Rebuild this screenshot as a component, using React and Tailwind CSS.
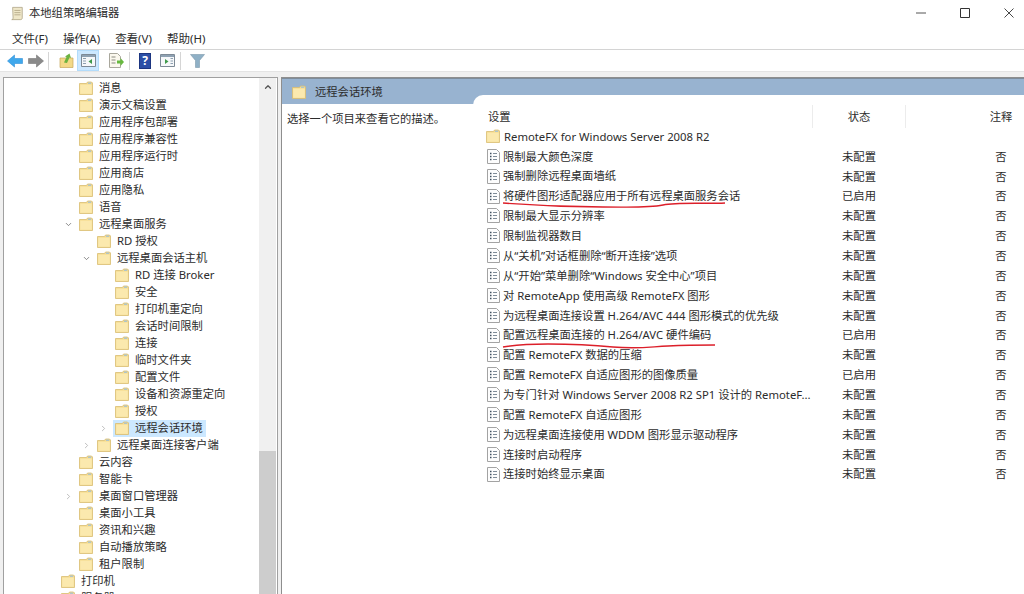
import React from 'react';
import { ChevronRight, ChevronDown, ChevronUp } from 'lucide-react';

const FONT = "font-['Noto_Sans','Noto_Sans_CJK_SC',sans-serif]";

const Folder = ({ className = '' }) => (
  <svg viewBox="0 0 14 14" className={`w-[14px] h-[14px] shrink-0 ${className}`}>
    <path d="M0.5 2.5h7l1-1.5h4l1 1v11.5h-13z" fill="#f6dc8e" stroke="#d9bd72" strokeWidth="0.8" />
    <path d="M1.2 3.6h11.6v9.2h-11.6z" fill="#fbe9ae" />
    <path d="M9 1.6h3.2v1.2h-3.2z" fill="#9fc0d8" />
  </svg>
);

const Doc = () => (
  <svg viewBox="0 0 13 15" className="w-[13px] h-[15px] shrink-0">
    <path d="M0.5 0.5h9l3 3v11h-12z" fill="#fdfdfd" stroke="#a3a3a3" strokeWidth="1" />
    <path d="M3 4.5h1.500M3 7.500h1.500M3 10.500h1.500" stroke="#3f4f5f" strokeWidth="1.300" />
    <path d="M6 4.500h4M6 7.500h4M6 10.500h4" stroke="#7f8c98" strokeWidth="1" />
  </svg>
);

// level 0 = 打印机, 每层缩进 18px
const tree = [
  [1, '消息'],
  [1, '演示文稿设置'],
  [1, '应用程序包部署'],
  [1, '应用程序兼容性'],
  [1, '应用程序运行时'],
  [1, '应用商店'],
  [1, '应用隐私'],
  [1, '语音'],
  [1, '远程桌面服务', 'open'],
  [2, 'RD 授权'],
  [2, '远程桌面会话主机', 'open'],
  [3, 'RD 连接 Broker'],
  [3, '安全'],
  [3, '打印机重定向'],
  [3, '会话时间限制'],
  [3, '连接'],
  [3, '临时文件夹'],
  [3, '配置文件'],
  [3, '设备和资源重定向'],
  [3, '授权'],
  [3, '远程会话环境', 'closed', true],
  [2, '远程桌面连接客户端', 'closed'],
  [1, '云内容'],
  [1, '智能卡'],
  [1, '桌面窗口管理器', 'closed'],
  [1, '桌面小工具'],
  [1, '资讯和兴趣'],
  [1, '自动播放策略'],
  [1, '租户限制'],
  [0, '打印机'],
  [0, '服务器'],
];

const rows = [
  ['限制最大颜色深度', '未配置'],
  ['强制删除远程桌面墙纸', '未配置'],
  ['将硬件图形适配器应用于所有远程桌面服务会话', '已启用'],
  ['限制最大显示分辨率', '未配置'],
  ['限制监视器数目', '未配置'],
  ['从“关机”对话框删除“断开连接”选项', '未配置'],
  ['从“开始”菜单删除“Windows 安全中心”项目', '未配置'],
  ['对 RemoteApp 使用高级 RemoteFX 图形', '未配置'],
  ['为远程桌面连接设置 H.264/AVC 444 图形模式的优先级', '未配置'],
  ['配置远程桌面连接的 H.264/AVC 硬件编码', '已启用'],
  ['配置 RemoteFX 数据的压缩', '未配置'],
  ['配置 RemoteFX 自适应图形的图像质量', '已启用'],
  ['为专门针对 Windows Server 2008 R2 SP1 设计的 RemoteF...', '未配置'],
  ['配置 RemoteFX 自适应图形', '未配置'],
  ['为远程桌面连接使用 WDDM 图形显示驱动程序', '未配置'],
  ['连接时启动程序', '未配置'],
  ['连接时始终显示桌面', '未配置'],
];

const indent = ['pl-[61px]', 'pl-[79px]', 'pl-[97px]', 'pl-[115px]'];
const arrowPos = ['left-[46px]', 'left-[64px]', 'left-[82px]', 'left-[99px]'];

const TreeRow = ({ level, label, arrow, selected }) => (
  <div className={`relative h-[17px] flex items-center shrink-0 ${indent[level]}`}>
    {arrow === 'open' && <ChevronDown className={`absolute ${arrowPos[level]} w-[9px] h-[9px] text-[#666]`} />}
    {arrow === 'closed' && <ChevronRight className={`absolute ${arrowPos[level]} w-[9px] h-[9px] text-[#aaa]`} />}
    <div className={`flex items-center h-[17px] ${selected ? 'bg-[#cce8ff] -ml-[2px] pl-[2px]' : ''}`}>
      <Folder />
      <span className="ml-[6px] pr-[3px] whitespace-nowrap">{label}</span>
    </div>
  </div>
);

const ListRow = ({ name, state }) => (
  <div className="flex items-center h-[19.87px] shrink-0">
    <div className="w-[339px] flex items-center pl-[14px]">
      <Doc />
      <span className="ml-[3px] whitespace-nowrap">{name}</span>
    </div>
    <div className="w-[94px] text-center">{state}</div>
    <div className="flex-1 text-center pl-[72px]">否</div>
  </div>
);

const Toolbar = () => (
  <div className="h-[21px] flex items-center bg-white shrink-0 relative">
    {/* back */}
    <svg viewBox="0 0 16 14" className="w-[16px] h-[14px] ml-[7px]">
      <path d="M0.5 7l7-6v3.5h8v5h-8v3.5z" fill="#3fa8ec" stroke="#2f8fd6" strokeWidth="0.6" />
    </svg>
    {/* forward */}
    <svg viewBox="0 0 16 14" className="w-[16px] h-[14px] ml-[5px]">
      <path d="M15.5 7l-7-6v3.5h-8v5h8v3.5z" fill="#8a8a8a" stroke="#777" strokeWidth="0.6" />
    </svg>
    <div className="w-px h-[18px] bg-[#d5d5d5] ml-[4px]" />
    {/* up */}
    <svg viewBox="0 0 15 15" className="w-[15px] h-[15px] ml-[10px]">
      <path d="M1 5h13v9.500h-13z" fill="#f3d987" stroke="#c7a75a" strokeWidth="0.7" />
      <path d="M5 9.500l2.500-5.500-1.500-0.500 4.500-3 1.500 4.500-1.500-0.500-2.500 5.500z" fill="#6cb33f" />
    </svg>
    <div className="ml-[3px] w-[22px] h-[21px] bg-[#cce8ff] border border-[#b3dcfb] flex items-center justify-center">
      <svg viewBox="0 0 15 13" className="w-[15px] h-[13px]">
        <path d="M0.5 0.5h14v12h-14z" fill="#f6f8fa" stroke="#7d8a96" />
        <path d="M1 1h13v2h-13z" fill="#8ea1b2" />
        <path d="M2 4.5h3M2 7h3M2 9.5h3" stroke="#8ea1b2" />
        <path d="M11 5v5l-3.5-2.500z" fill="#3f9a4a" />
      </svg>
    </div>
    <svg viewBox="0 0 16 15" className="w-[16px] h-[15px] ml-[9px]">
      <path d="M1.500 0.500h8l3 3v11h-11z" fill="#fbf8ee" stroke="#a9a79c" />
      <path d="M3.500 4h4M3.500 7h4M3.500 10h4" stroke="#8b8b80" />
      <path d="M9 7.500h3.500v-2.500l3.500 4-3.500 4v-2.500h-3.500z" fill="#67b93f" />
    </svg>
    <div className="w-px h-[18px] bg-[#d5d5d5] ml-[5px]" />
    <div className="ml-[9px] w-[12px] h-[16px] bg-[#2c4fa6] border border-[#1c3580] text-white font-bold text-[12px] leading-[14px] text-center">?</div>
    <svg viewBox="0 0 15 13" className="w-[15px] h-[13px] ml-[9px]">
      <path d="M0.500 0.500h14v12h-14z" fill="#f6f8fa" stroke="#7d8a96" />
      <path d="M1 1h13v2h-13z" fill="#8ea1b2" />
      <path d="M10.500 4.500h2.500M10.500 7h2.500M10.500 9.500h2.500" stroke="#8ea1b2" />
      <path d="M5 5v5l3.500-2.500z" fill="#3f9a4a" />
    </svg>
    <div className="w-px h-[18px] bg-[#d5d5d5] ml-[5px]" />
    <svg viewBox="0 0 15 14" className="w-[15px] h-[14px] ml-[9px]">
      <path d="M0.500 0.500h14l-5 6v7h-4v-7z" fill="#8fb0c6" stroke="#7c98ab" strokeWidth="0.6" />
    </svg>
  </div>
);

export default function App() {
  return (
    <div className={`relative w-[1024px] h-[594px] overflow-hidden bg-white flex flex-col text-[11.3px] leading-none text-[#2c2c2c] ${FONT}`}>
      {/* title bar */}
      <div className="h-[29px] flex items-center shrink-0 pb-[3px]">
        <svg viewBox="0 0 16 16" className="w-[14px] h-[15px] ml-[10px]">
          <path d="M3 1h11v12c0 1.500-1 2-2 2h-10c1 0 1.500-1 1.500-2z" fill="#efe7c9" stroke="#a59a78" strokeWidth="0.8" />
          <path d="M5 4.500h7M5 7h7M5 9.500h7" stroke="#a59a78" strokeWidth="0.8" />
        </svg>
        <span className="ml-[5px]">本地组策略编辑器</span>
        <div className="ml-auto flex items-center">
          <svg viewBox="0 0 10 10" className="w-[10px] h-[10px] mr-[34px]"><path d="M0 5h10" stroke="#555" strokeWidth="1" /></svg>
          <svg viewBox="0 0 10 10" className="w-[10px] h-[10px] mr-[34px]"><path d="M0.500 0.500h9v9h-9z" fill="none" stroke="#333" strokeWidth="1" /></svg>
          <svg viewBox="0 0 10 10" className="w-[10px] h-[10px] mr-[10px]"><path d="M0.500 0.500l9 9M9.500 0.500l-9 9" stroke="#333" strokeWidth="0.9" /></svg>
        </div>
      </div>
      {/* menu */}
      <div className="h-[21px] flex items-center shrink-0 pl-[12px] gap-[15px] text-[11.5px] border-b border-[#d4d4d4]">
        <span>文件(F)</span>
        <span>操作(A)</span>
        <span>查看(V)</span>
        <span>帮助(H)</span>
      </div>
      <Toolbar />
      <div className="h-[6px] bg-[#f0f0f0] border-t border-[#e4e4e4] shrink-0" />

      <div className="flex-1 min-h-0 flex bg-[#f0f0f0] pl-[3px]">
        {/* tree */}
        <div className="w-[275px] border border-[#a0a0a0] border-b-0 bg-white flex overflow-hidden">
          <div className="w-[259px] shrink-0 -ml-[4px] pt-[1.500px] flex flex-col overflow-hidden">
            {tree.map(([level, label, arrow, selected]) => (
              <TreeRow key={label + level} level={level} label={label} arrow={arrow} selected={selected} />
            ))}
          </div>
          <div className="w-[17px] shrink-0 bg-[#f0f0f0] flex flex-col">
            <div className="h-[373px] flex justify-center pt-[4px]">
              <ChevronUp className="w-[10px] h-[10px] text-[#555]" strokeWidth={3} />
            </div>
            <div className="flex-1 bg-[#cdcdcd]" />
          </div>
        </div>
        <div className="w-[3px]" />
        {/* right pane */}
        <div className="flex-1 border-l border-t border-[#8e8e8e] bg-white flex flex-col min-w-0">
          <div className="h-[26px] bg-[#98b3d0] flex items-center shrink-0 pl-[10px] pt-[1px] border-t border-[#7e8c9a]">
            <Folder />
            <span className="ml-[9px]">远程会话环境</span>
          </div>
          <div className="flex-1 flex min-h-0">
            <div className="w-[191px] pl-[5px] pt-[9px] shrink-0 whitespace-nowrap">选择一个项目来查看它的描述。</div>
            <div className="flex-1 flex flex-col min-w-0 -mt-[9px] bg-white rounded-tl-[10px]">
              <div className="h-[31.5px] pt-[10px] flex items-start shrink-0">
                <div className="w-[339px] h-[23px] flex items-center pl-[15px]">设置</div>
                <div className="w-[94px] h-[23px] flex items-center justify-center border-l border-r border-[#ececec]">状态</div>
                <div className="flex-1 h-[23px] flex items-center justify-center pl-[72px]">注释</div>
              </div>
              <div className="flex items-center h-[19.87px] shrink-0 pl-[13px]">
                <Folder />
                <span className="ml-[4px]">RemoteFX for Windows Server 2008 R2</span>
              </div>
              {rows.map(([name, state]) => (
                <ListRow key={name} name={name} state={state} />
              ))}
            </div>
          </div>
        </div>
      </div>

      {/* 红色手绘下划线 */}
      <svg viewBox="0 0 1024 594" className="absolute inset-0 w-[1024px] h-[594px] pointer-events-none" fill="none">
        <path d="M503 203c25 2 60 4 100 4 30 0 45 1 60-2 15-3 40-1 62-2" stroke="#dc1f2a" strokeWidth="1.400" />
        <path d="M503 347c12-2 25-3 45-3 25 0 45 1 65 3 25 2 35 0 55-1 20-1 32-1 47-1" stroke="#dc1f2a" strokeWidth="1.400" />
      </svg>
    </div>
  );
}
